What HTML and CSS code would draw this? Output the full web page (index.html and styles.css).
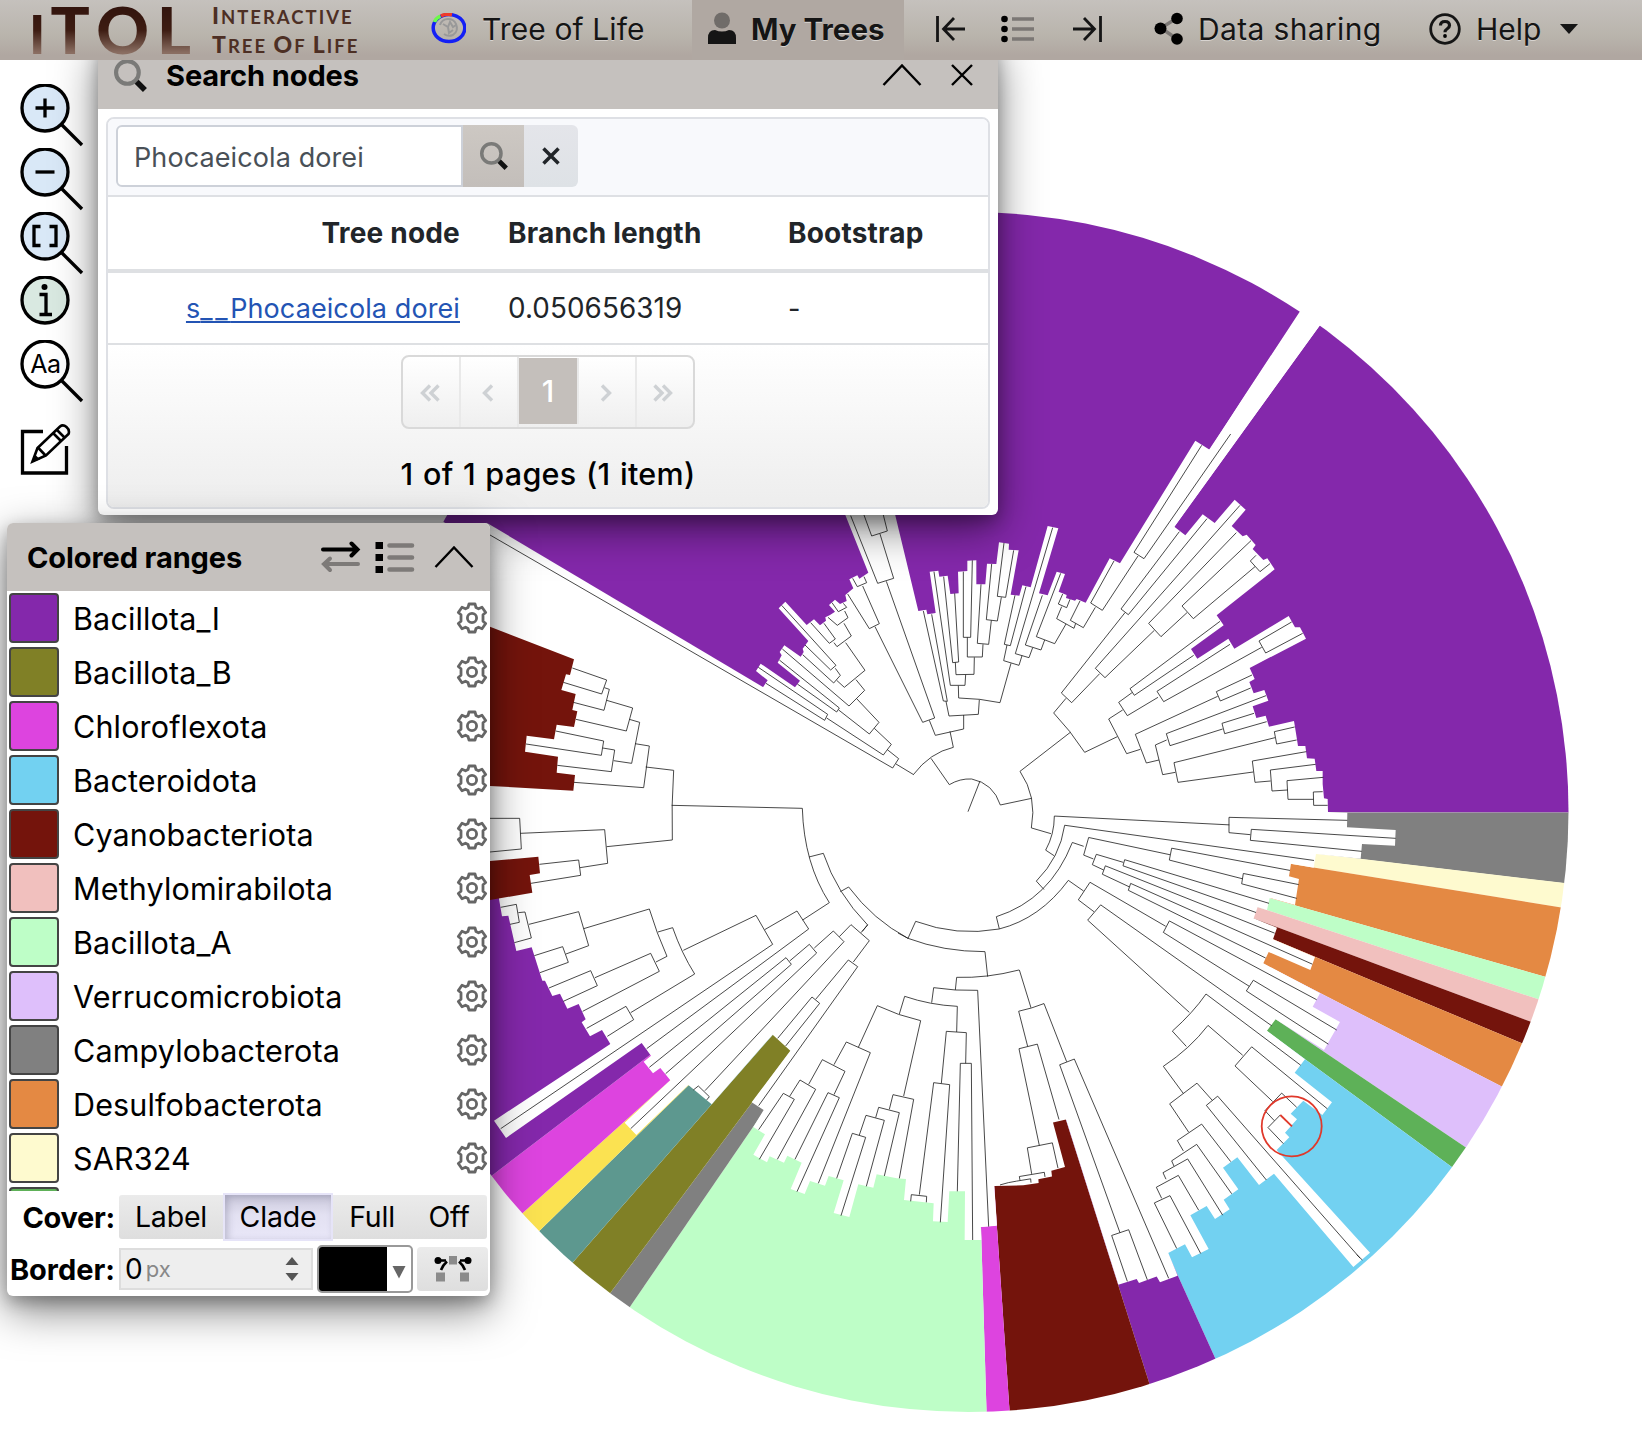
FILE: index.html
```html
<!DOCTYPE html>
<html lang="en">
<head>
<meta charset="utf-8">
<title>iTOL: Interactive Tree Of Life</title>
<link rel="stylesheet" href="styles.css">
</head>
<body>
<svg class="defs" width="0" height="0">
  <symbol id="gear" viewBox="-16 -16 32 32"><path d="M-3-14L3-14L4-10.500L6.500-9.200L10-10.700L13.700-5.500L11-3.200L11 3.200L13.700 5.500L10 10.700L6.500 9.200L4 10.500L3 14L-3 14L-4 10.500L-6.500 9.200L-10 10.700L-13.700 5.500L-11 3.200L-11-3.200L-13.700-5.500L-10-10.700L-6.500-9.200L-4-10.500Z"/><circle r="4.600"/></symbol>
  <symbol id="lens" viewBox="0 0 32 32"><circle cx="13" cy="13" r="11" fill="none" stroke="#7a7a78" stroke-width="4"/><path d="M22 22l8 8" stroke="#111" stroke-width="5.4"/></symbol>
  <symbol id="up" viewBox="0 0 40 24"><path d="M1.5 22L20 2.500L38.500 22" fill="none" stroke="#000" stroke-width="2.400"/></symbol>
</svg>

<svg class="tree" width="1642" height="1436" viewBox="0 0 1642 1436">
  <clipPath id="disc"><circle cx="968.5" cy="812" r="600"/></clipPath>
  <g clip-path="url(#disc)" id="wedges">
    <path fill="#8428ab" d="M968.5 812L368.500 480.500L368.500 112L1366 112L1300.600 312Z"/>
    <path fill="#8428ab" d="M968.500 812L1319.500 325.700L1400 212L1642 212L1642 812.600Z"/>
    <path fill="#808080" d="M968.500 812.600H1642L1642 892.500Z"/>
    <path fill="#fefacf" d="M968.500 812L1642 892.300L1642 920.500Z"/>
    <path fill="#e48943" d="M968.500 812L1642 920.500L1642 1004.400Z"/>
    <path fill="#befec7" d="M968.500 812L1642 1004.400L1642 1033.300Z"/>
    <path fill="#f1c0be" d="M968.500 812L1642 1033.300L1642 1063.200Z"/>
    <path fill="#74140c" d="M968.500 812L1642 1063.200L1642 1093.400Z"/>
    <path fill="#e48943" d="M968.500 812L1642 1093.400L1642 1158.700Z"/>
    <path fill="#debffb" d="M968.500 812L1642 1158.700L1642 1266.300Z"/>
    <path fill="#5eb158" d="M968.500 812L1642 1266.300L1642 1306.700Z"/>
    <path fill="#72d1f1" d="M968.500 812L1642 1306.700V1480H1270.200Z"/>
    <path fill="#8428ab" d="M968.500 812L1270.200 1480H1179.900Z"/>
    <path fill="#74140c" d="M968.500 812L1179.900 1480H1014.300Z"/>
    <path fill="#dd44df" d="M968.500 812L1014.300 1480H988.600Z"/>
    <path fill="#befec7" d="M968.500 812L988.600 1480H511.500Z"/>
    <path fill="#808080" d="M968.500 812L511.500 1480H471Z"/>
    <path fill="#808026" d="M968.500 812L471 1480H381.600Z"/>
    <path fill="#5d988f" d="M968.500 812L381.600 1480H284Z"/>
    <path fill="#fbe251" d="M968.500 812L284 1480H226Z"/>
    <path fill="#dd44df" d="M968.500 812L226 1480H93Z"/>
    <path fill="#8428ab" d="M968.500 812L93 1480H0V986.500Z"/>
  </g>

  <g fill="#fff">
    <circle cx="968.500" cy="812" r="60"/>
    <path d="M486.700 522.700L763.300 687.300L968.500 810V816L466 556Z"/>
    <path transform="translate(490 500) scale(.33333)" d="M1435 940L818 563 833 541 798 513 812 491 915 562 930 542 863 488 875 466 869 456 883 436 932 470 941 456 938 446 955 423 866 325 886 305 950 375 972 358 990 376 1008 362 1006 352 1020 345 1035 335 1017 315 1035 299 1050 312 1070 303 1066 285 1090 265 1078 238 1102 226 1108 236 1135 218 1060 30 1212 30 1285 333Z"/>
    <path transform="translate(900 400) scale(.33333)" d="M205 1236L20 640 55 633 79 629 82 643 107 639 89 515 115 512 118 530 143 527 151 582 176 580 174 515 202 513 202 482 229 481 229 553 256 553 261 491 289 492 297 427 327 431 326 449 356 451 332 584 358 587 367 556 392 562 443 378 475 385 417 580 443 586 470 515 495 522 476 575 500 585 498 594 525 602 530 597 557 608 629 475 660 490 886 122 929 149 1025 0 1234 -318 1298 -277 823 380 856 406 908 343 944 369 1004 299 1037 329 995 378 1028 409 1040 404 1067 435 1058 447 1090 480 1102 475 1124 508 950 646 971 676 873 747 892 776 985 716 1003 746 1166 648 1185 682 1200 682 1218 716 1049 804 1064 837 1048 846 1061 880 1093 870 1105 902 1058 919 1069 954 1097 947 1107 980 1182 963 1188 1000 1194 1038 1216 1038 1221 1075 1244 1076 1249 1113 1268 1113 1268 1152 1272 1195 1283 1197 1284 1237Z"/>
    <path transform="translate(1160 800) scale(.33333)" d="M-574 36L480 10 503 36 562 38 561 82 707 90 705 137 606 132 602 176 468 162 461 203 393 191 387 229 417 237 411 275 405 315 329 294 321 330 293 321 281 355 351 383 339 418 465 471 451 510 326 456 310 490 480 580 458 620 540 666 492 750 347 658 321 692 435 778 404 818 516 907 487 945 430 902 392 941 411 958 375 998 388 1012 350 1050 630 1358 580 1401 342 1121 297 1155 232 1072 189 1103 235 1168 191 1199 209 1228 165 1257 140 1218 91 1246 146 1347 96 1372 75 1333 23 1360Z"/>
    <path transform="translate(960 800) scale(.33333 .38265)" d="M25 31L680 1100 624 1182 653 1243 600 1260 590 1245 537 1262 530 1252 475 1267 318 835 279 843 315 959 274 969 276 984 235 991 236 1001 190 1007 103 1009 111 1112 60 1116 63 1150 24 1150 20 1100Z"/>
    <path transform="translate(480 860) scale(.33333)" d="M1465 -144L1530 1090 1552 1097 1502 1101 1504 1140 1454 1140 1455 994 1408 994 1403 1086 1359 1084 1361 1030 1272 1020 1278 957 1250 955 1190 943 1180 983 1135 973 1108 1071 1061 1059 1091 961 1046 948 1035 977 990 963 974 1002 932 987 965 908 922 887 912 908 869 889 861 907 820 884 855 823 820 801 851 750 815 727 931 572 878 524 695 733 625 675 469 825 434 788 571 661 541 624 519 640 491 605 513 587 485 549 78 834 42 782 391 552 366 510 330 529 305 487 317 478 296 432 262 446 240 401 217 408 195 362 187 362 155 262 109 273 85 167 66 169 57 117 60 40Z"/>
  </g>
  <g fill="#74140c" transform="translate(490 500) scale(.33333)">
    <path d="M-60 357L0 380 252 478 240 525 228 523 214 570 257 582 247 630 262 634 252 681 200 674 192 718 110 707 105 755 204 770 200 818 255 825 250 872 0 858 -60 855Z"/>
    <path d="M-60 1088L0 1083 145 1070 150 1120 119 1125 127 1178 0 1200 -60 1210Z"/>
  </g>

  <g class="branches">
    <path transform="translate(490 500) scale(.33333)" d="M0 105L1208 804L1226 776L1192 749M1218 792L1271 824M1153 685L1204 733L1180 765L1010 654M828 550L1004 661L1013 643L805 502M1100 596L1167 667L1138 702L1046 630M922 552L1040 636L1048 624L868 480M1098 539L1124 571L1077 618L877 447M1067 428L1125 511L1063 562L1040 541M1036 505L1051 526L1031 549L938 464M875 316L1038 496L1022 510L945 435M1062 370L1084 408L1041 440L1032 428M1002 370L1036 417L1018 430L962 368M1064 333L1074 353L1042 376L1014 352M1060 310L1070 322L1045 335L1026 308M1118 258L1168 371L1138 386L1073 282M1122 230L1130 248L1102 260L1088 235M1155 380L1298 667L1334 654L1189 244M1170 102L1211 235L1163 250L1082 47M1180 45L1192 93L1145 108L1122 45M1318 661L1336 706L1421 687V645M247 504L350 540L335 582L220 547M343 563L358 568L342 631L250 607M350 601L428 624L409 693L258 658M418 658L449 667L425 790L371 782M197 693L341 723L334 766L108 732M338 744L374 750L364 815L202 796M435 731L478 738L461 863L252 847M467 801L551 811Q544 915 547 1020L350 1040M545 916L937 925Q942 1090 1018 1208L938 1260M0 955H89L94 1047L0 1056M91 1000L344 989L353 1090L270 1103M148 1093L266 1080L272 1126L123 1150M957 1071L1000 1060Q1040 1180 1133 1275L1113 1298M1051 1175L1076 1161Q1150 1260 1254 1315"/>
    <path transform="translate(900 400) scale(.33333)" d="M204 1235L240 1143M93 1075L148 1154Q180 1135 215 1137Q280 1150 301 1215L395 1195M40 1124Q90 1058 160 1042L150 994M511 997L360 1114Q412 1190 394 1284M498 895L461 939Q510 990 554 1057L652 1010M599 821L515 908L484 879L675 638M921 356L685 644L663 627L838 395M763 691L615 833L586 805L1020 316M861 638L783 710L746 670L1009 398M1065 500L880 656L846 618L1053 422M1068 466L1051 483L1080 515L1110 491M992 102L732 476L702 457L905 136M714 468L607 631L572 609L642 483M586 622L550 683L511 661L540 603M527 670L522 685L470 656L485 620M498 672L464 731L409 710L482 520M510 598L500 623L475 612L488 582M434 720L423 750L376 735L427 586M398 743L387 773L346 761L458 383M366 767L357 796L311 782L321 735M345 586L313 733L331 737L378 560M333 790L300 908Q240 895 176 894L175 857M238 899L235 943L147 948L138 904M95 643L142 904L130 903L70 633M197 824L195 856H151L102 515M223 772L222 823L168 824L166 787M131 530L158 788L176 786L164 580M202 712V771H247L249 733M190 515V712H212L217 481M274 661L266 733L232 730L243 553M304 592L292 663L259 659L275 492M341 451L317 592L292 589L312 429M696 878L656 907L682 947L774 892M668 930L626 957L680 1061L721 1048M881 766L703 886L690 866L960 664M1085 742L791 905L771 874L990 733M1208 700L1097 759L1077 723L1175 666M777 1080L739 1089L706 1003L953 889M1052 864L961 903L949 875L1056 825M826 1117L788 1124L766 1035L800 1020M968 987L810 1037L799 1001L1098 887M1100 965L974 1001L966 970L1062 940M1060 1116L834 1147L822 1088L1125 1013M1190 1020L1130 1032L1123 995L1184 981M1112 1143L1065 1147L1057 1083L1219 1055M1163 1170L1116 1173L1111 1110L1247 1093M1240 1198H1164L1161 1142L1270 1132M1268 1175L1240 1176L1241 1216H1283"/>
    <path transform="translate(480 860) scale(.33333)" d="M854 209L951 153L986 207L500 566M610 271L828 166L878 253L62 806M534 216L578 203Q605 280 644 342L452 458M311 206L508 147Q530 220 561 289L528 306M147 193L296 155L326 257L258 282M115 158L135 156L154 234L103 248M62 142L109 133L118 187L90 193M163 287L248 260L265 307L180 338M345 353L512 280L538 334L308 454M207 384L332 332L352 377L250 424M320 505L438 439L461 479L382 529M508 622L918 293L934 313L557 641M929 303L988 253L1010 279L452 806M1003 264L1060 213L1092 245L675 692M1078 230L1113 194L1168 242L1120 306M1147 214L1163 194M1007 418L1105 300L1133 320L836 737M893 535L996 411L1019 430L917 558M640 690L655 678L688 710L680 720M1254 219L1284 235Q1390 275 1515 275L1523 350M1284 235L1307 184Q1430 230 1558 207M1426 390L1430 352Q1520 355 1617 330M1355 428L1361 383Q1425 393 1493 391L1526 1100M1258 462L1274 409Q1350 435 1432 439L1430 516M1135 562L1192 437Q1255 467 1322 482L1271 708M1062 614L1099 546L1171 578L1015 970M986 673L1027 599L1095 634L1062 704M929 709L960 660L1007 688L892 898M836 809L910 700L943 718L838 898M945 898L1044 698L1078 713L951 995M1070 955L1117 820L1157 832L1083 1067M1138 825L1158 766L1213 781L1159 979M1187 773L1196 742L1258 758L1213 948M1228 748L1239 704L1301 718L1258 955M1384 670L1399 514L1459 518L1457 610M1318 1004L1361 668L1409 674L1381 1087M1292 1024L1294 1004L1340 1009L1339 1027M1432 994L1441 610H1474L1478 1140"/>
    <path transform="translate(960 800) scale(.33333 .38265)" d="M214 73L273 88M808 65L283 42Q283 90 257 131L283 146M1062 158L314 66Q300 150 229 212L252 234M371 121L337 111Q270 260 109 305L118 337Q240 310 325 210L371 238M400 154L371 144L386 98L630 143M848 206L628 157L635 126L990 184M1010 257L845 219L850 192L1016 221M431 183L397 169L409 142L490 163M888 294L489 172L494 156L927 270M508 227L427 194L436 172L944 348M917 413L505 236L512 218L1057 429M402 292L355 261L390 215L617 330M868 487L610 346L628 316L1070 522M1105 638L859 499L880 471L1130 601M688 555L383 314L422 274L935 590M679 644L637 604Q700 555 738 507L1022 693M670 767L610 696Q690 650 744 589L848 667M938 788L825 695L875 645L1102 807M943 838L915 812L965 766L1010 803M961 823L924 856L970 898M686 868L629 794L711 740L757 785M919 993L739 798L773 774L1200 1197M670 917L652 890L725 847L812 945M642 957L635 943L710 900L815 1029M618 991L609 974L683 938L788 1085M605 1041L589 1012L655 981L716 1072M650 1172L583 1053L630 1034L722 1185M178 444L213 543M203 644L176 552Q215 545 252 532L320 684M238 903L177 650L232 638L297 835M480 1131L299 692L343 677L626 1250M502 1258L455 1138L506 1123L562 1254M215 977L202 909L277 896L294 962M255 985L253 973L178 984L180 994M213 1000L212 990L170 996L145 1000L120 1006"/>
    <path transform="translate(1160 800) scale(.33333)" d="M562 61L207 52V98L271 104M707 115L274 88L271 121L605 154M590 1364L607 1380"/>
  </g>
  <g fill="none" stroke="#e0392b" stroke-width="1.8">
    <circle cx="1291.700" cy="1126.300" r="30"/>
    <path d="M1280.300 1115L1292 1126.400"/>
  </g>
</svg>

<header class="topbar">
  <div class="logo"><span class="itol"><i>I</i>TOL</span><span class="tagline"><span><b>I</b>nteractive</span><span><b>T</b>ree <b>O</b>f <b>L</b>ife</span></span></div>
  <nav>
    <a class="item tol"><svg width="36" height="32" viewBox="0 0 36 32"><g fill="none" stroke-width="3.500"><ellipse cx="19" cy="15" rx="15.800" ry="13.500" stroke="#1420f5"/><path d="M4.500 9Q6 5 10.500 3.200" stroke="#6dfa4a"/><path d="M11 3Q16 .500 22 1.800" stroke="#ee3a2a"/></g><path d="M10 12q2-6 8-6t8 5q3 7-3 11-5 2-9-1M13 11l5 3 2-5 3 5 3-2M18 14l1 6 4-3" fill="none" stroke="#999" stroke-width="2"/></svg><span>Tree of Life</span></a>
    <a class="item active"><svg width="30" height="34" viewBox="0 0 30 34"><circle cx="15" cy="8.500" r="8" fill="#706c69"/><path d="M1 32v-6q0-8 7-8 7 3 14 0 7 0 7 8v6z" fill="#151515"/></svg><span>My Trees</span></a>
    <a class="item prev"><svg width="30" height="26" viewBox="0 0 30 26"><path d="M1.500 0V26M29 13H8M18 2L7.500 13L18 24" class="ln"/></svg></a>
    <a class="item list"><svg width="34" height="28" viewBox="0 0 34 28"><path d="M11 4H33M11 14H33M11 24H33" stroke="#7b7774" stroke-width="3.600"/><circle cx="3.500" cy="4" r="3.300"/><circle cx="3.500" cy="14" r="3.300"/><circle cx="3.500" cy="24" r="3.300"/></svg></a>
    <a class="item next"><svg width="30" height="26" viewBox="0 0 30 26"><path d="M28.500 0V26M1 13H22M12 2L22.500 13L12 24" class="ln"/></svg></a>
    <a class="item share"><svg width="30" height="34" viewBox="0 0 30 34"><path d="M23 6L7 16L23 27" fill="none" stroke="#7b7774" stroke-width="3.400"/><circle cx="23" cy="6.500" r="5.800"/><circle cx="6.500" cy="16.500" r="6"/><circle cx="23" cy="27" r="5.800"/></svg><span>Data sharing</span></a>
    <a class="item help"><svg width="32" height="32" viewBox="0 0 32 32"><circle cx="16" cy="16" r="14.300" class="ln"/><path d="M11.500 12.500Q11.500 8.500 16 8.500T20.500 12.500Q20.500 14.500 18 16Q16 17.200 16 19.300" fill="none" stroke="#151515" stroke-width="3.200"/><circle cx="16" cy="23" r="1.900"/></svg><span>Help</span><b class="caret"></b></a>
  </nav>
</header>

<aside class="tools">
  <svg width="64" height="64" viewBox="0 0 64 64"><path d="M42 41L62 61" class="k"/><circle cx="25" cy="24" r="23" fill="#d9e8f7" class="k"/><path d="M15.500 24H34.500M25 14.500V33.500" class="k"/></svg>
  <svg width="64" height="64" viewBox="0 0 64 64"><path d="M42 41L62 61" class="k"/><circle cx="25" cy="24" r="23" fill="#d9e8f7" class="k"/><path d="M15.500 24H34.500" class="k"/></svg>
  <svg width="64" height="64" viewBox="0 0 64 64"><path d="M42 41L62 61" class="k"/><circle cx="25" cy="24" r="23" fill="#d9e8f7" class="k"/><path d="M20.500 14.500H14V33.500H20.500M29.500 14.500H36V33.500H29.500" fill="none" class="k"/></svg>
  <svg width="64" height="64" viewBox="0 0 64 64"><circle cx="25" cy="24" r="23" fill="#d9e9e1" class="k"/><circle cx="24.500" cy="11" r="3"/><path d="M19.500 18.500H26V38M19.500 38.500H32" fill="none" class="k"/></svg>
  <svg width="64" height="64" viewBox="0 0 64 64"><path d="M42 41L62 61" class="k"/><circle cx="25" cy="24" r="23" fill="#fff" class="k"/><text x="25.500" y="32.500" text-anchor="middle" class="aa">Aa</text></svg>
  <svg class="edit" width="52" height="52" viewBox="0 0 52 52"><path d="M23 7.500H2.500V49H46.500V22" fill="none" class="k"/><path d="M12.500 37.500L17.500 24L40 2.500Q43 0 46.500 3T48.500 10L26 31.500Z" fill="#fff" class="p"/><path d="M17.500 23L26 32M33 9L41.500 17.500M36.500 5.500L45 14" class="p"/><path d="M12 38L14.500 30L20 35.500Z"/></svg>
</aside>

<section class="panel search">
  <div class="bar"><svg width="33" height="33"><use href="#lens"/></svg><h2>Search nodes</h2><svg width="40" height="24"><use href="#up"/></svg><svg class="close" width="22" height="22" viewBox="0 0 22 22"><path d="M1 1L21 21M21 1L1 21" stroke="#000" stroke-width="2.400"/></svg></div>
  <div class="box">
    <div class="query"><div class="field">Phocaeicola dorei</div><div class="go"><svg width="28" height="28" viewBox="0 0 32 32"><use href="#lens" width="32" height="32"/></svg></div><div class="clear"><svg width="18" height="18" viewBox="0 0 18 18"><path d="M1.500 1.500L16.500 16.500M16.500 1.500L1.500 16.500" stroke="#212529" stroke-width="3.500"/></svg></div></div>
    <div class="row head"><span>Tree node</span><span>Branch length</span><span>Bootstrap</span></div>
    <div class="row"><span><a>s<em>__</em>Phocaeicola dorei</a></span><span class="val">0.050656319</span><span>-</span></div>
    <div class="foot">
      <div class="pager">
        <span><svg width="20" height="18" viewBox="0 0 20 18"><path d="M10 1.500L2.500 9L10 16.500M18.500 1.500L11 9L18.500 16.500"/></svg></span>
        <span><svg width="12" height="18" viewBox="0 0 12 18"><path d="M10 1.500L2.500 9L10 16.500"/></svg></span>
        <span class="on">1</span>
        <span><svg width="12" height="18" viewBox="0 0 12 18"><path d="M2 1.500L9.500 9L2 16.500"/></svg></span>
        <span><svg width="20" height="18" viewBox="0 0 20 18"><path d="M1.500 1.500L9 9L1.500 16.500M10 1.500L17.500 9L10 16.500"/></svg></span>
      </div>
      <p>1 of 1 pages (1 item)</p>
    </div>
  </div>
</section>

<section class="panel ranges">
  <div class="bar"><h2>Colored ranges</h2>
    <svg width="40" height="32" viewBox="0 0 40 32" fill="none" stroke-width="4" stroke-linecap="round"><path d="M2 8.500H35M30.500 2.500L36.500 8.500L30.500 14.500" stroke="#000"/><path d="M37 23H5M9 17.500L3 23L9 29" stroke="#7d7a78"/></svg>
    <svg class="rl" width="40" height="32" viewBox="0 0 40 32"><path d="M14.500 4.500H37M14.500 16.500H37M14.500 28.500H37" stroke="#7d7a78" stroke-width="4.600" stroke-linecap="round"/><path d="M.5 1H8V8H.5ZM.5 13H8V20H.5ZM.5 25H8V32H.5Z"/></svg>
    <svg class="ru" width="40" height="24"><use href="#up"/></svg>
  </div>
  <ul>
    <li><i style="background:#8428ab"></i><span>Bacillota_I</span><svg><use href="#gear"/></svg></li>
    <li><i style="background:#808026"></i><span>Bacillota_B</span><svg><use href="#gear"/></svg></li>
    <li><i style="background:#dd44df"></i><span>Chloroflexota</span><svg><use href="#gear"/></svg></li>
    <li><i style="background:#72d1f1"></i><span>Bacteroidota</span><svg><use href="#gear"/></svg></li>
    <li><i style="background:#74140c"></i><span>Cyanobacteriota</span><svg><use href="#gear"/></svg></li>
    <li><i style="background:#f1c0be"></i><span>Methylomirabilota</span><svg><use href="#gear"/></svg></li>
    <li><i style="background:#befec7"></i><span>Bacillota_A</span><svg><use href="#gear"/></svg></li>
    <li><i style="background:#debffb"></i><span>Verrucomicrobiota</span><svg><use href="#gear"/></svg></li>
    <li><i style="background:#808080"></i><span>Campylobacterota</span><svg><use href="#gear"/></svg></li>
    <li><i style="background:#e48943"></i><span>Desulfobacterota</span><svg><use href="#gear"/></svg></li>
    <li><i style="background:#fefacf"></i><span>SAR324</span><svg><use href="#gear"/></svg></li>
    <li><i style="background:#5eb158"></i></li>
  </ul>
  <div class="opt cover"><label>Cover:</label><div class="seg"><span>Label</span><span class="on">Clade</span><span>Full</span><span>Off</span></div></div>
  <div class="opt border"><label>Border:</label>
    <div class="num"><span>0</span><small>px</small><svg width="14" height="24" viewBox="0 0 14 24" fill="#555"><path d="M7 0L13.500 8H.5ZM.5 16H13.500L7 24Z"/></svg></div>
    <div class="color"><b></b><svg width="14" height="14" viewBox="0 0 14 14"><path d="M.5 1H13.500L7 13.500Z" fill="#666"/></svg></div>
    <div class="curve"><svg width="38" height="26" viewBox="0 0 38 26"><path d="M4 4.500H12M26 4.500H34" stroke="#000" stroke-width="2.400"/><path d="M7 14Q9 9 13 5.500M25 5.500Q29 9 31 14" fill="none" stroke="#000" stroke-width="2.600"/><circle cx="4" cy="4.500" r="3.500"/><circle cx="34" cy="4.500" r="3.500"/><path d="M15 0H23V8.500H15ZM2 16.500H11V25.500H2ZM26 16.500H35V25.500H26Z" fill="#8b8b8b"/></svg></div>
  </div>
</section>
</body>
</html>
```
FILE: styles.css
```css
* { box-sizing: border-box; }
body { margin: 0; width: 1642px; height: 1436px; overflow: hidden; position: relative; background: #fff; font-family: Inter, "Liberation Sans", sans-serif; color: #000; }
.defs { position: absolute; }
svg { display: block; flex: none; }
h2, p, ul { margin: 0; padding: 0; }

.tree { position: absolute; left: 0; top: 0; }
.branches path { fill: none; stroke: #1a1a1a; stroke-width: .8; vector-effect: non-scaling-stroke; }

/* top bar */
.topbar { position: absolute; z-index: 5; left: 0; top: 0; width: 1642px; height: 60px; display: flex; background: linear-gradient(#c5c1bd, #b9b4ac 60%, #b0a7a1 92%); }
.logo { width: 430px; padding-left: 29px; display: flex; align-items: center; }
.itol { width: 183px; height: 60px; font: 900 65px/58px Lato, sans-serif; letter-spacing: 8px; white-space: nowrap; background: linear-gradient(#32140d 10%, #3d1c12 50%, #8a6e62 88%); -webkit-background-clip: text; background-clip: text; color: transparent; }
.itol i { font-style: normal; font-size: 54px; line-height: 50px; letter-spacing: 5px; }
.tagline { display: flex; flex-direction: column; font: 700 18.500px/27px Lato, sans-serif; text-transform: uppercase; color: #4d2f24; white-space: nowrap; letter-spacing: 2px; padding-top: 1px; }
.tagline b { font-size: 23px; }
nav { display: flex; font-size: 30px; color: #151515; text-shadow: 0 1px 0 #d8d4d0; }
.item { display: flex; align-items: center; height: 60px; padding-bottom: 3px; white-space: nowrap; }
.ln { fill: none; stroke: #151515; stroke-width: 2.8; }
.tol { width: 262px; letter-spacing: .1px; } .tol span { margin-left: 16px; }
.active { width: 212px; padding-left: 15px; background: #b0a8a2; font-size: 29.500px; font-weight: 700; } .active span { margin-left: 14px; }
.prev { width: 96px; padding-left: 32px; }
.list { width: 72px; padding-left: 1px; }
.next { width: 82px; }
.share { width: 275px; letter-spacing: .35px; } .share span { margin-left: 14px; }
.help span { margin-left: 15px; }
.caret { margin-left: 19px; border: 9px solid transparent; border-top: 10px solid #151515; border-bottom: 0; }

/* canvas tools */
.tools { position: absolute; left: 19.500px; top: 84px; width: 64px; }
.k { stroke: #000; stroke-width: 3.3; }
.p { stroke: #000; stroke-width: 2.6; }
.aa { font: 25px Inter, sans-serif; letter-spacing: -.5px; }
.edit { margin-top: 20px; }

/* floating windows */
.panel { position: absolute; background: #fff; box-shadow: 0 14px 44px rgba(0,0,0,.5), 0 6px 16px rgba(0,0,0,.25); }
.bar { display: flex; align-items: center; background: #c5c1be; }
h2 { font-size: 29px; font-weight: 700; white-space: nowrap; letter-spacing: -.1px; }
.search { left: 98px; top: 41px; width: 900px; height: 474px; border-radius: 6px; padding-bottom: 6px; }
.search .bar { height: 68px; padding: 2px 25px 2px 16px; }
.search h2 { margin-left: 19px; margin-right: auto; }
.close { margin-left: 29px; }
.box { margin: 8px 8px 0; height: 392px; border: 2px solid #dee0e5; border-radius: 8px; overflow: hidden; }
.query { height: 78px; display: flex; padding: 6px 8px; background: #f8f9fc; border-bottom: 2px solid #dee0e4; }
.field { width: 347px; height: 62px; border: 2px solid #cdd1d9; border-radius: 6px 0 0 6px; background: #fff; padding-left: 16px; font-size: 27px; letter-spacing: .1px; line-height: 61px; color: #495057; white-space: nowrap; }
.go { width: 61px; height: 62px; background: linear-gradient(#cdc8c3, #c3beba); display: grid; place-items: center; }
.clear { width: 54px; height: 62px; background: linear-gradient(#e4e5ea, #dee2e6); border-radius: 0 6px 6px 0; display: grid; place-items: center; }
.row { height: 72px; display: grid; grid-template-columns: 352px 280px 1fr; column-gap: 0; align-items: center; border-bottom: 2px solid #dee0e3; font-size: 27px; letter-spacing: .1px; color: #212529; white-space: nowrap; }
.row span:first-child { text-align: right; }
.row span:nth-child(2) { padding-left: 48px; }
.row span:nth-child(3) { padding-left: 48px; }
.row .val { font-size: 27.800px; }
.head { height: 76px; border-bottom-width: 4px; font-size: 28px; font-weight: 700; letter-spacing: .2px; }
.row a { color: #2354b4; text-decoration: underline; text-decoration-thickness: 2px; text-underline-offset: 3px; text-decoration-skip-ink: none; }
.row em { font-style: normal; letter-spacing: 2.6px; }
.foot { height: 164px; background: linear-gradient(#fff, #ededed); display: flex; flex-direction: column; align-items: center; padding-top: 10px; }
.pager { width: 294px; height: 74px; border: 2px solid #d9d9d9; border-radius: 8px; display: flex; background: linear-gradient(#fff, #efefef); }
.pager span { flex: none; width: 58px; height: 70px; display: grid; place-items: center; border-right: 2px solid #e9e9e9; padding: 2px 2px 0 0; }
.pager span:last-child { flex: 1; border: 0; padding-right: 4px; }
.pager path { fill: none; stroke: #ced1d4; stroke-width: 3.4; }
.pager .on { width: 60px; height: 66px; margin-top: 1px; background: #c4bfbb; color: #fff; font-size: 30px; font-weight: 500; padding: 0; }
.foot p { margin-top: 27px; font-size: 30.500px; line-height: 36px; font-weight: 500; white-space: nowrap; letter-spacing: .3px; word-spacing: 1px; }

.ranges { left: 7px; top: 523px; width: 483px; height: 773px; border-radius: 6px; overflow: visible; }
.ranges .bar { height: 68px; padding-left: 20px; border-radius: 6px 6px 0 0; }
.ranges h2 { width: 294px; }
.rl { margin-left: 14px; }
.ru { margin-left: 19px; }
ul { list-style: none; height: 600px; overflow: hidden; padding: 0 2px; }
li { height: 54px; display: flex; align-items: center; font-size: 30.500px; white-space: nowrap; }
li i { width: 50px; height: 50px; border: 2px solid #444; border-radius: 4px; flex: none; }
li span { margin-left: 14px; flex: 1; letter-spacing: .15px; padding-top: 1px; }
li svg { width: 32px; height: 32px; fill: none; stroke: #666; stroke-width: 2.8; stroke-linejoin: round; }
.opt { display: flex; align-items: center; }
.opt label { width: 108px; display: flex; justify-content: flex-end; font-size: 29px; font-weight: 700; white-space: nowrap; }
.cover { height: 52px; }
.cover label { letter-spacing: -.3px; }
.seg { margin-left: 4px; width: 368px; height: 44px; display: flex; align-items: center; background: linear-gradient(#ebebeb, #dedede); border-radius: 3px; font-size: 28.500px; letter-spacing: -.2px; }
.seg span { text-align: center; line-height: 44px; width: 104px; }
.seg .on { width: 110px; height: 48px; border: 2px solid #e6e4f8; background: linear-gradient(#c9c7da, #e3e1f2 45%, #e9e7f8); box-shadow: inset 3px 2px 7px rgba(90,90,120,.3); }
.seg span:nth-child(3) { width: 78px; } .seg span:nth-child(4) { width: 76px; }
.border { height: 52px; }
.num { margin-left: 4px; width: 194px; height: 42px; border: 2px solid #ddd; background: #eee; display: flex; align-items: center; padding: 0 12px 0 4px; font-size: 28px; }
.num small { margin-left: 3px; font-size: 22px; color: #888; flex: 1; }
.color { margin-left: 4px; width: 96px; height: 48px; border: 2px solid #999; border-radius: 5px; display: flex; align-items: center; overflow: hidden; }
.color b { width: 68px; height: 44px; background: #000; margin-right: 5px; }
.color svg { margin-top: 6px; }
.curve { margin-left: 4px; width: 71px; height: 44px; background: linear-gradient(#ebebeb, #dedede); border-radius: 4px; display: grid; place-items: center; }
```
